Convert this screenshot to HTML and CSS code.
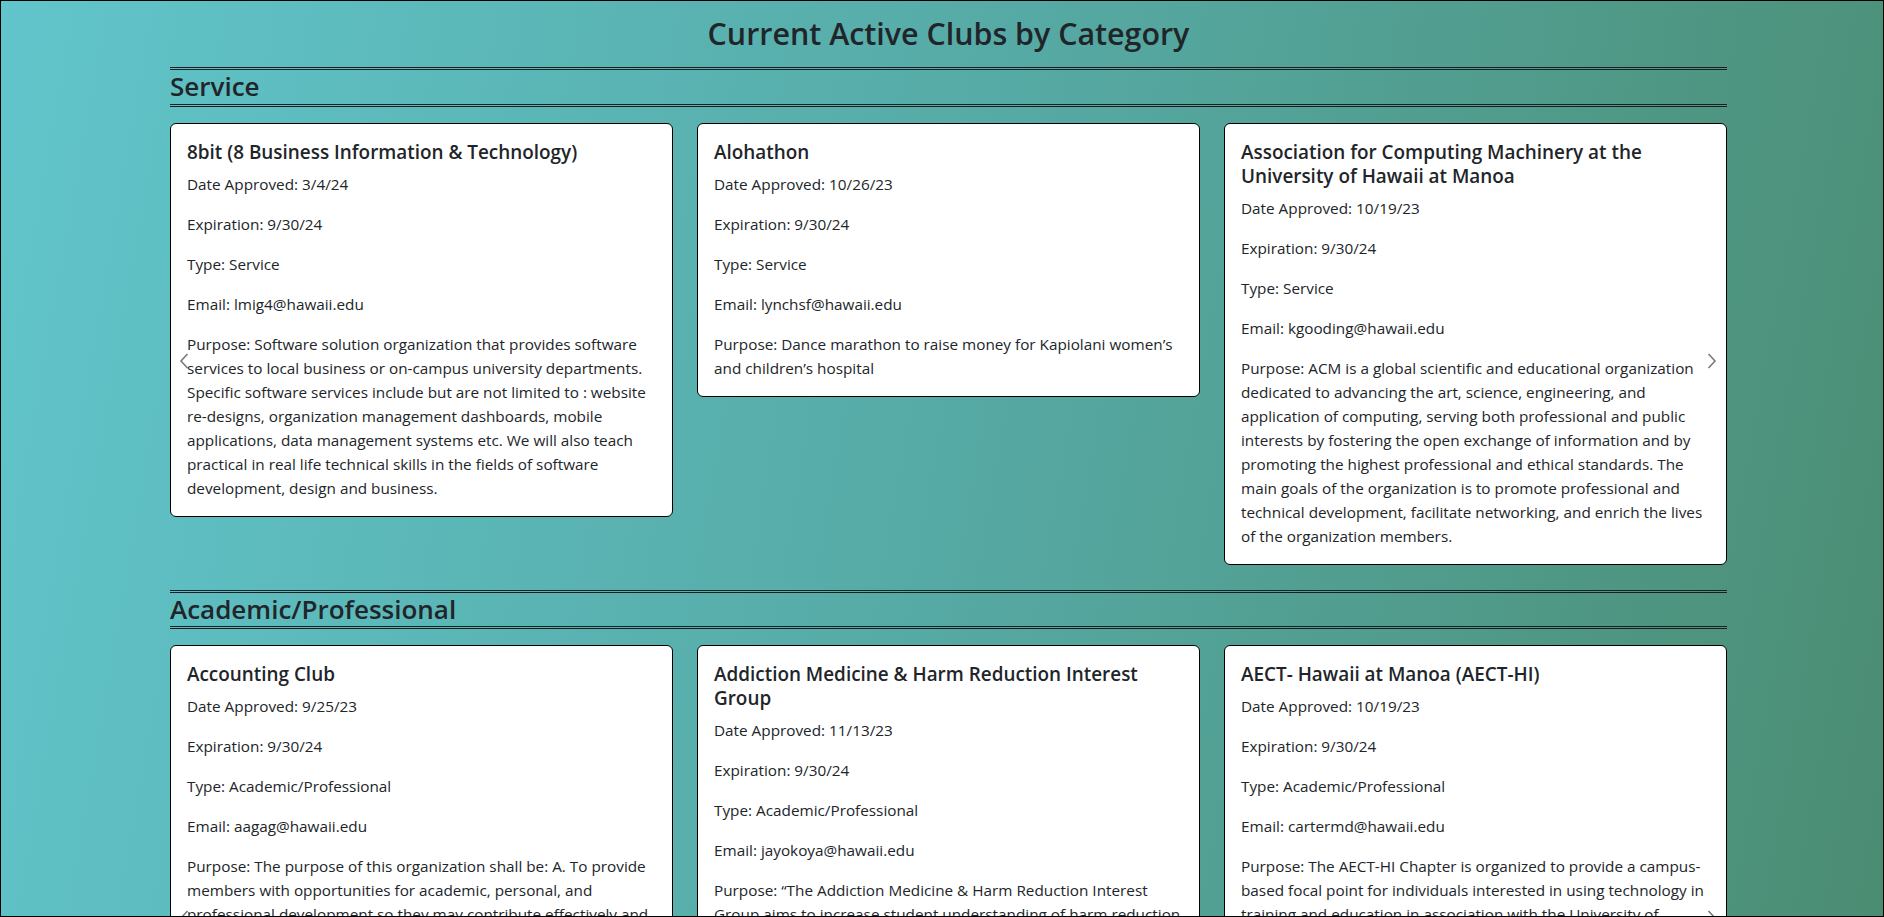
FILE: index.html
```html
<!DOCTYPE html>
<html lang="en">
<head>
<meta charset="utf-8">
<title>Current Active Clubs by Category</title>
<link rel="stylesheet" href="styles.css">
</head>
<body>
<div class="frame">
  <div class="container">
    <h2 class="page-title">Current Active Clubs by Category</h2>

    <section class="category">
      <h3 class="category-title">Service</h3>
      <div class="carousel">
        <div class="cards">
          <div class="card">
            <h5 class="card-title">8bit (8 Business Information &amp; Technology)</h5>
            <p>Date Approved: 3/4/24</p>
            <p>Expiration: 9/30/24</p>
            <p>Type: Service</p>
            <p>Email: lmig4@hawaii.edu</p>
            <p>Purpose: Software solution organization that provides software services to local business or on-campus university departments. Specific software services include but are not limited to : website re-designs, organization management dashboards, mobile applications, data management systems etc. We will also teach practical in real life technical skills in the fields of software development, design and business.</p>
          </div>
          <div class="card">
            <h5 class="card-title">Alohathon</h5>
            <p>Date Approved: 10/26/23</p>
            <p>Expiration: 9/30/24</p>
            <p>Type: Service</p>
            <p>Email: lynchsf@hawaii.edu</p>
            <p>Purpose: Dance marathon to raise money for Kapiolani women’s and children’s hospital</p>
          </div>
          <div class="card">
            <h5 class="card-title">Association for Computing Machinery at the University of Hawaii at Manoa</h5>
            <p>Date Approved: 10/19/23</p>
            <p>Expiration: 9/30/24</p>
            <p>Type: Service</p>
            <p>Email: kgooding@hawaii.edu</p>
            <p>Purpose: ACM is a global scientific and educational organization dedicated to advancing the art, science, engineering, and application of computing, serving both professional and public interests by fostering the open exchange of information and by promoting the highest professional and ethical standards. The main goals of the organization is to promote professional and technical development, facilitate networking, and enrich the lives of the organization members.</p>
          </div>
        </div>
        <button class="ctrl ctrl-prev ctrl-service" aria-label="Previous"><svg viewBox="0 0 10 16" width="10" height="16"><polyline points="8.5,1 2,8 8.5,15"/></svg></button>
        <button class="ctrl ctrl-next ctrl-service" aria-label="Next"><svg viewBox="0 0 10 16" width="10" height="16"><polyline points="1.5,1 8,8 1.5,15"/></svg></button>
      </div>
    </section>

    <section class="category">
      <h3 class="category-title">Academic/Professional</h3>
      <div class="carousel">
        <div class="cards">
          <div class="card">
            <h5 class="card-title">Accounting Club</h5>
            <p>Date Approved: 9/25/23</p>
            <p>Expiration: 9/30/24</p>
            <p>Type: Academic/Professional</p>
            <p>Email: aagag@hawaii.edu</p>
            <p>Purpose: The purpose of this organization shall be: A. To provide members with opportunities for academic, personal, and professional development so they may contribute effectively and responsibly to the accounting profession and the community. B. To foster relationships between students, faculty, and professionals.</p>
          </div>
          <div class="card">
            <h5 class="card-title">Addiction Medicine &amp; Harm Reduction Interest Group</h5>
            <p>Date Approved: 11/13/23</p>
            <p>Expiration: 9/30/24</p>
            <p>Type: Academic/Professional</p>
            <p>Email: jayokoya@hawaii.edu</p>
            <p>Purpose: “The Addiction Medicine &amp; Harm Reduction Interest Group aims to increase student understanding of harm reduction principles and addiction medicine through education, service and advocacy.”</p>
          </div>
          <div class="card">
            <h5 class="card-title">AECT- Hawaii at Manoa (AECT-HI)</h5>
            <p>Date Approved: 10/19/23</p>
            <p>Expiration: 9/30/24</p>
            <p>Type: Academic/Professional</p>
            <p>Email: cartermd@hawaii.edu</p>
            <p>Purpose: The AECT-HI Chapter is organized to provide a campus-based focal point for individuals interested in using technology in training and education in association with the University of Hawaii at Manoa and the Association for Educational Communications and Technology.</p>
          </div>
        </div>
        <button class="ctrl ctrl-prev ctrl-academic" aria-label="Previous"><svg viewBox="0 0 10 16" width="10" height="16"><polyline points="8.5,1 2,8 8.5,15"/></svg></button>
        <button class="ctrl ctrl-next ctrl-academic" aria-label="Next"><svg viewBox="0 0 10 16" width="10" height="16"><polyline points="1.5,1 8,8 1.5,15"/></svg></button>
      </div>
    </section>
  </div>
</div>
</body>
</html>
```

FILE: styles.css
```css
html, body {
  margin: 0;
  padding: 0;
}

body {
  font-family: "Open Sans", "Noto Sans", sans-serif;
  font-size: 15.3px;
  line-height: 24px;
  color: #212529;
}

.frame {
  box-sizing: border-box;
  height: 100vh;
  overflow: hidden;
  border: 1px solid #000;
  background: linear-gradient(100deg, #61c5cb 0%, #56aaa5 50%, #4b8d73 100%);
}

.container {
  width: 1557px;
  margin-left: 169px;
}

.page-title {
  margin: 14px 0 14px;
  font-size: 30.4px;
  line-height: 38px;
  font-weight: 600;
  text-align: center;
}

.category {
  margin-bottom: 25px;
}

.category-title {
  margin: 0 0 16px;
  font-size: 26px;
  line-height: 33.6px;
  font-weight: 600;
  border-top: 3px double #1b1f22;
  border-bottom: 3px double #1b1f22;
}

.carousel {
  position: relative;
}

.cards {
  display: grid;
  grid-template-columns: repeat(3, 1fr);
  column-gap: 24px;
  align-items: start;
}

.card {
  background: #fff;
  border: 1px solid #000;
  border-radius: 6px;
  padding: 16px;
}

.card-title {
  margin: 0 0 8px;
  font-size: 18.9px;
  line-height: 24px;
  font-weight: 600;
}

.card p {
  margin: 0 0 16px;
}

.card p:last-child {
  margin-bottom: 0;
}

.ctrl {
  position: absolute;
  padding: 0;
  border: 0;
  background: none;
  width: 10px;
  height: 16px;
  line-height: 0;
}

.ctrl svg polyline {
  fill: none;
  stroke: #7a7a7a;
  stroke-width: 1.6;
}

.ctrl-prev { left: 9px; }
.ctrl-next { right: 10px; }
.ctrl-service { top: 230px; }
.ctrl-academic { top: 265px; }
```
